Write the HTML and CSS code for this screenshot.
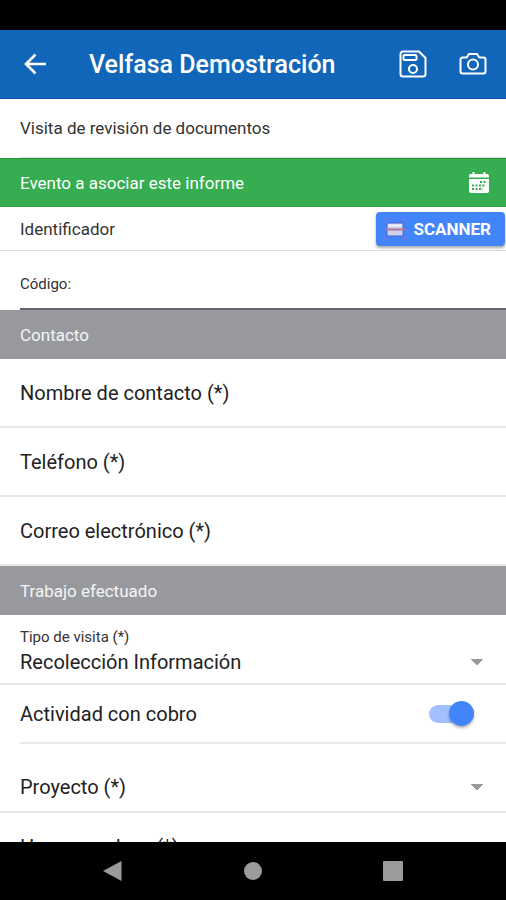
FILE: index.html
```html
<!DOCTYPE html>
<html lang="es">
	<head>
		<meta charset="utf-8">
		<meta name="viewport" content="width=device-width, initial-scale=1">
		<title>Velfasa Demostración</title>
		<link rel="stylesheet" href="styles.css">
	</head>
	<body>
		<div class="statusbar"></div>
		<header class="toolbar">
			<button class="icon-button" type="button" aria-label="Volver">
				<svg width="22" height="22" viewBox="0 0 22 22"><path d="M11.500 1.500L2 11l9.500 9.500M2.500 11H22" fill="none" stroke="currentColor" stroke-width="2.600"/></svg>
			</button>
			<h1 class="title">Velfasa Demostración</h1>
			<button class="icon-button" type="button" aria-label="Guardar">
				<svg width="28" height="28" viewBox="0 0 28 28" fill="none" stroke="currentColor" stroke-width="2"><path d="M4 1.500h16l6.500 6.500v16a2.500 2.500 0 0 1-2.500 2.500H4A2.500 2.500 0 0 1 1.500 24V4A2.500 2.500 0 0 1 4 1.500z"/><rect x="4.500" y="5" width="13" height="5" rx="1"/><circle cx="14" cy="19" r="4"/></svg>
			</button>
			<button class="icon-button" type="button" aria-label="Cámara">
				<svg width="28" height="28" viewBox="0 0 28 28" fill="none" stroke="currentColor" stroke-width="2"><path d="M3.500 7.500h4.200L10 4h8l2.300 3.500h4.200a2 2 0 0 1 2 2v12a2 2 0 0 1-2 2h-21a2 2 0 0 1-2-2v-12a2 2 0 0 1 2-2z"/><circle cx="14" cy="14.500" r="5"/></svg>
			</button>
		</header>
		<main class="content">
			<div class="row row-intro"><span class="row-inner">Visita de revisión de documentos</span></div>
			<div class="event">
				<span>Evento a asociar este informe</span>
				<button class="icon-button" type="button" aria-label="Elegir evento">
					<svg width="22" height="22" viewBox="0 0 22 22">
						<path d="M4.500 0h2v2h9V0h2v2H19a2 2 0 0 1 2 2v1.500H1V4a2 2 0 0 1 2-2h1.500z" fill="currentColor"/>
						<path d="M1 7h20v12a2 2 0 0 1-2 2H3a2 2 0 0 1-2-2z" fill="currentColor"/>
						<path d="M12 10h6M4 13.500h14M4 17h11" stroke="#35ad50" stroke-width="2" stroke-dasharray="2 1.500"/>
					</svg>
				</button>
			</div>
			<div class="ident">
				<span>Identificador</span>
				<button class="scanner" type="button">
					<svg width="22" height="22" viewBox="0 0 22 22">
						<rect x="3" y="5" width="16" height="13" rx="1" fill="#cdd1f0" stroke="#4a5fc4"/>
						<path d="M4 7.500h14" stroke="#efeefa" stroke-width="2"/>
						<path d="M1 11.500h20" stroke="#b0749f" stroke-width="2"/>
						<path d="M1 4V1h3M18 1h3v3M1 18v3h3M18 21h3v-3" fill="none" stroke="#8a70c8"/>
					</svg>
					SCANNER
				</button>
			</div>
			<div class="code">
				<label for="codigo">Código:</label>
				<input id="codigo" type="text">
			</div>
			<h2 class="section">Contacto</h2>
			<input class="row field" type="text" placeholder="Nombre de contacto (*)" aria-label="Nombre de contacto">
			<input class="row field" type="tel" placeholder="Teléfono (*)" aria-label="Teléfono">
			<input class="row field" type="email" placeholder="Correo electrónico (*)" aria-label="Correo electrónico">
			<h2 class="section">Trabajo efectuado</h2>
			<div class="row visit">
				<label for="tipo">Tipo de visita (*)</label>
				<select id="tipo"><option>Recolección Información</option></select>
			</div>
			<div class="charge">
				<label for="cobro">Actividad con cobro</label>
				<input id="cobro" class="toggle" type="checkbox" role="switch" checked>
			</div>
			<div class="row project">
				<select aria-label="Proyecto"><option>Proyecto (*)</option></select>
			</div>
			<input class="row field" type="text" placeholder="Horas a cobrar (*)" aria-label="Horas a cobrar">
		</main>
		<nav class="navbar">
			<button class="icon-button" type="button" aria-label="Atrás"><svg width="20" height="22" viewBox="0 0 20 22"><path d="M0 11L18.500 1v20z" fill="currentColor"/></svg></button>
			<button class="icon-button" type="button" aria-label="Inicio"><svg width="20" height="20" viewBox="0 0 20 20"><circle cx="10" cy="10" r="9" fill="currentColor"/></svg></button>
			<button class="icon-button" type="button" aria-label="Recientes"><svg width="20" height="20" viewBox="0 0 20 20"><rect width="20" height="20" rx="1" fill="currentColor"/></svg></button>
		</nav>
	</body>
</html>
```
FILE: styles.css
```css
* { box-sizing:border-box; }
body { margin:0; height:100vh; display:flex; flex-direction:column; background:#fff; color:#333; font:17px Roboto, sans-serif; }
button, input, select { font:inherit; color:inherit; border:0; margin:0; padding:0; background:none; outline:0; }
svg { display:block; }

.statusbar { flex:none; height:30px; background:#000; }
.toolbar { flex:none; height:69px; padding:0 19px 0 24px; display:flex; align-items:center; gap:32px; background:#1166b9; border-bottom:1px solid #0b4fae; color:#fff; }
.title { flex:1; margin:0 0 0 11px; font-size:25px; font-weight:500; }
.icon-button { color:inherit; }

.content { flex:1; min-height:0; overflow:hidden; display:flex; flex-direction:column; }
.content > * { flex:none; }
.row { width:100%; min-height:69px; padding:0 20px; border-bottom:2px solid #e8e8e8; }
.row-intro { min-height:59px; padding:0 0 0 20px; border:0; display:flex; }
.row-inner { flex:1; display:flex; align-items:center; border-bottom:1px solid #ddd; }
.event { height:49px; padding:0 16px 0 20px; display:flex; align-items:center; justify-content:space-between; background:#35ad50; border-top:1px solid #1f9640; border-bottom:1px solid #2ba548; color:#fff; }
.ident { height:44px; padding:0 1px 0 20px; display:flex; align-items:center; justify-content:space-between; border-bottom:1px solid #ddd; }
.scanner { height:34px; padding:0 14px 0 8px; display:flex; align-items:center; gap:8px; border-radius:4px; background:#4285fb; color:#fff; font-weight:700; box-shadow:0 2px 3px rgba(0,0,0,.35); }
.code { height:59px; margin-left:20px; display:flex; align-items:center; gap:8px; border-bottom:2px solid #66666a; padding-top:8px; font-size:15px; }
.code input { flex:1; }
.section { height:49px; margin:0; padding:0 20px; display:flex; align-items:center; background:#98999e; color:#f4f4f4; font-size:17px; font-weight:400; }

.field, .row select, .charge { font-size:20px; color:#222; }
.field::placeholder { color:#222; opacity:1; }
.row select { width:100%; appearance:none; background:conic-gradient(from -45deg at 50% 100%, #999 90deg, transparent 0) no-repeat right 3px center / 12px 6px; }
.visit { display:flex; flex-direction:column; justify-content:center; gap:4px; min-height:70px; padding-top:4px; font-size:15px; }
.charge { height:59px; margin-left:20px; padding-right:32px; display:flex; align-items:center; justify-content:space-between; border-bottom:2px solid #e8e8e8; }
.toggle { appearance:none; width:45px; height:18px; border-radius:9px; display:flex; align-items:center; justify-content:flex-end; background:#a1c0fd; }
.toggle::before { content:""; width:25px; height:25px; border-radius:50%; background:#4285fb; box-shadow:0 2px 3px rgba(0,0,0,.3); }
.toggle:not(:checked) { justify-content:flex-start; background:#ccc; }
.project { display:flex; align-items:flex-end; padding-bottom:12px; }

.navbar { flex:none; height:58px; display:flex; align-items:center; justify-content:center; gap:120px; background:#000; color:#9b9b9b; }
```
